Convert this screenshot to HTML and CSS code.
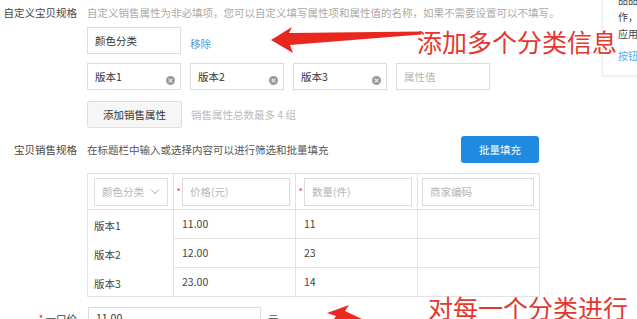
FILE: index.html
```html
<!DOCTYPE html>
<html lang="zh-CN">
<head>
  <meta charset="UTF-8" />
  <title>宝贝规格</title>
  <link rel="stylesheet" href="styles.css">
</head>
<body>
  <div class="page">

    <div class="row row-intro">
      <div class="label">自定义宝贝规格</div>
      <div class="hint">自定义销售属性为非必填项，您可以自定义填写属性项和属性值的名称，如果不需要设置可以不填写。</div>
    </div>

    <div class="row row-name">
      <div class="label"></div>
      <div class="box">颜色分类</div>
      <a class="link" href="#">移除</a>
    </div>

    <div class="row row-values">
      <div class="label"></div>
      <div class="box">版本1<span class="clear"></span></div>
      <div class="box">版本2<span class="clear"></span></div>
      <div class="box">版本3<span class="clear"></span></div>
      <div class="box placeholder">属性值</div>
    </div>

    <div class="row row-add">
      <div class="label"></div>
      <button class="btn">添加销售属性</button>
      <span class="hint note">销售属性总数最多 4 组</span>
    </div>

    <div class="row row-sku">
      <div class="label">宝贝销售规格</div>
      <div class="sku-head">
        <span class="text">在标题栏中输入或选择内容可以进行筛选和批量填充</span>
        <button class="btn btn-blue">批量填充</button>
      </div>
    </div>

    <table class="sku-table">
      <colgroup>
        <col class="col-1">
        <col class="col-n">
        <col class="col-n">
        <col class="col-n">
      </colgroup>
      <thead>
        <tr>
          <th class="c1"><div class="box select">颜色分类<span class="chev"></span></div></th>
          <th><div class="cell-in"><i class="req">*</i><div class="box ph">价格(元)</div></div></th>
          <th><div class="cell-in"><i class="req">*</i><div class="box ph">数量(件)</div></div></th>
          <th><div class="cell-in plain"><div class="box ph">商家编码</div></div></th>
        </tr>
      </thead>
      <tbody>
        <tr><td class="c1">版本1</td><td>11.00</td><td>11</td><td></td></tr>
        <tr><td class="c1">版本2</td><td>12.00</td><td>23</td><td></td></tr>
        <tr><td class="c1">版本3</td><td>23.00</td><td>14</td><td></td></tr>
      </tbody>
    </table>

    <div class="row row-price">
      <div class="label"><i class="req">*</i>一口价</div>
      <div class="box price">11.00</div>
      <span class="unit">元</span>
    </div>

    <!-- side tip panel, cut by the window -->
    <div class="side-tip">
      <div>品品，</div>
      <div>作，</div>
      <div>应用</div>
      <div class="tip-link">按钮</div>
    </div>

    <!-- red annotations drawn over the screenshot -->
    <svg class="arrow arrow-top" viewBox="268 24 156 32" width="156" height="32">
      <polygon points="271,40 292,27 289,33 421,31.5 421,34.5 290,45 293,53" fill="#e8281e"/>
    </svg>
    <div class="note-red note-top">添加多个分类信息</div>

    <svg class="arrow arrow-bottom" viewBox="324 302 40 17" width="40" height="17">
      <polygon points="327,313 349,305 345,311 362,319 334,319 336,316" fill="#ee2a1e"/>
    </svg>
    <div class="note-red note-bottom">对每一个分类进行</div>
  </div>
</body>
</html>
```

FILE: styles.css
```css
body {
  margin: 0;
  background: #fff;
  font-family: "Noto Sans CJK SC", "Noto Sans", sans-serif;
  font-size: 10.5px;
  color: #444;
  overflow: hidden;
}

.page {
  position: relative;
  width: 637px;
  height: 319px;
  overflow: hidden;
}

.row {
  display: flex;
  align-items: center;
}

.label {
  width: 87px;
  flex-shrink: 0;
  box-sizing: border-box;
  padding-right: 10px;
  text-align: right;
  color: #444;
}

.hint {
  color: #aaa;
}

.row-intro {
  height: 24px;
}

.box {
  position: relative;
  box-sizing: border-box;
  width: 94px;
  height: 27px;
  line-height: 25px;
  padding-left: 7px;
  border: 1px solid #dcdcdc;
  color: #333;
  background: #fff;
  white-space: nowrap;
}

.placeholder,
.ph {
  color: #b5b5b5;
}

.row-name {
  margin-top: 3px;
}

.link {
  margin-left: 9px;
  margin-top: 6px;
  color: #4a9fe0;
  text-decoration: none;
}

.row-values {
  margin-top: 9px;
  gap: 9px;
}

.row-values .label {
  margin-right: -9px;
}

.clear {
  position: absolute;
  right: 5px;
  top: 12px;
  width: 9px;
  height: 9px;
  border-radius: 50%;
  background: #9a9a9a;
}

.clear::before,
.clear::after {
  content: "";
  position: absolute;
  left: 4px;
  top: 2px;
  width: 1px;
  height: 5px;
  background: #fff;
  transform: rotate(45deg);
}

.clear::after {
  transform: rotate(-45deg);
}

.row-add {
  margin-top: 11px;
}

.btn {
  box-sizing: border-box;
  height: 27px;
  width: 95px;
  border: 1px solid #dedede;
  border-radius: 2px;
  background: #f6f6f6;
  color: #333;
  font-family: inherit;
  font-size: 10.5px;
  padding: 0;
}

.note {
  margin-left: 9px;
  color: #bbb;
}

.row-sku {
  margin-top: 8px;
}

.sku-head {
  width: 452px;
  display: flex;
  justify-content: space-between;
  align-items: center;
}

.sku-head .text {
  color: #555;
}

.btn-blue {
  width: 78px;
  border: none;
  border-radius: 3px;
  background: #1f8ae0;
  color: #fff;
}

.sku-table {
  margin: 10px 0 0 87px;
  width: 452px;
  border-collapse: collapse;
  table-layout: fixed;
  color: #444;
}

.col-1 {
  width: 86px;
}

.col-n {
  width: 122px;
}

.sku-table th,
.sku-table td {
  border: 1px solid #e3e3e3;
  padding: 0;
  text-align: left;
  font-weight: normal;
}

.sku-table thead tr {
  height: 36px;
}

.sku-table th.c1 {
  padding: 0 6px;
}

.sku-table .select {
  width: 74px;
  height: 28px;
  line-height: 26px;
  border-color: #e0e0e0;
  color: #b5b5b5;
}

.chev {
  position: absolute;
  right: 9px;
  top: 8px;
  width: 5px;
  height: 5px;
  border-right: 1px solid #c0c0c0;
  border-bottom: 1px solid #c0c0c0;
  transform: rotate(45deg);
}

.cell-in {
  display: flex;
  align-items: center;
  padding: 0 5px 0 1px;
}

.cell-in.plain {
  padding-left: 4px;
}

.cell-in .box {
  flex: 1;
  height: 28px;
  line-height: 26px;
}

.req {
  font-style: normal;
  color: #e33;
  width: 7px;
  text-align: center;
  font-size: 9px;
}

.sku-table tbody tr {
  height: 29px;
}

.sku-table td {
  padding-left: 8px;
  padding-bottom: 2px;
}

.sku-table td.c1 {
  padding: 3px 0 0 6px;
  border-top: none;
  border-bottom: none;
}

.sku-table tbody tr:first-child td.c1 {
  border-top: 1px solid #e3e3e3;
}

.sku-table tbody tr:last-child td.c1 {
  border-bottom: 1px solid #e3e3e3;
}

.row-price {
  margin-top: 10px;
  align-items: flex-start;
}

.row-price .label,
.row-price .unit {
  line-height: 20px;
  padding-top: 2px;
}

.row-price .req {
  font-size: 10.5px;
  margin-right: 2px;
}

.price {
  width: 173px;
  height: 27px;
  margin-left: 1px;
  line-height: 20px;
}

.unit {
  margin-left: 7px;
  color: #555;
}

/* tip panel on the right edge */
.side-tip {
  position: absolute;
  left: 602px;
  top: -12px;
  width: 60px;
  height: 88px;
  box-sizing: border-box;
  padding: 2px 0 0 15px;
  border: 1px solid #ececec;
  box-shadow: 0 1px 3px rgba(0, 0, 0, 0.08);
  background: #fff;
  line-height: 17px;
  color: #444;
  font-size: 10px;
}

.tip-link {
  margin-top: 5px;
  color: #5aa8e8;
}

/* annotations */
.arrow {
  position: absolute;
  display: block;
}

.arrow-top {
  left: 268px;
  top: 24px;
}

.arrow-bottom {
  left: 324px;
  top: 302px;
}

.note-red {
  position: absolute;
  font-size: 25px;
  line-height: 30px;
  color: #e3382e;
  white-space: nowrap;
  z-index: 2;
}

.note-top {
  left: 417px;
  top: 26px;
}

.note-bottom {
  left: 428px;
  top: 292px;
}
```
